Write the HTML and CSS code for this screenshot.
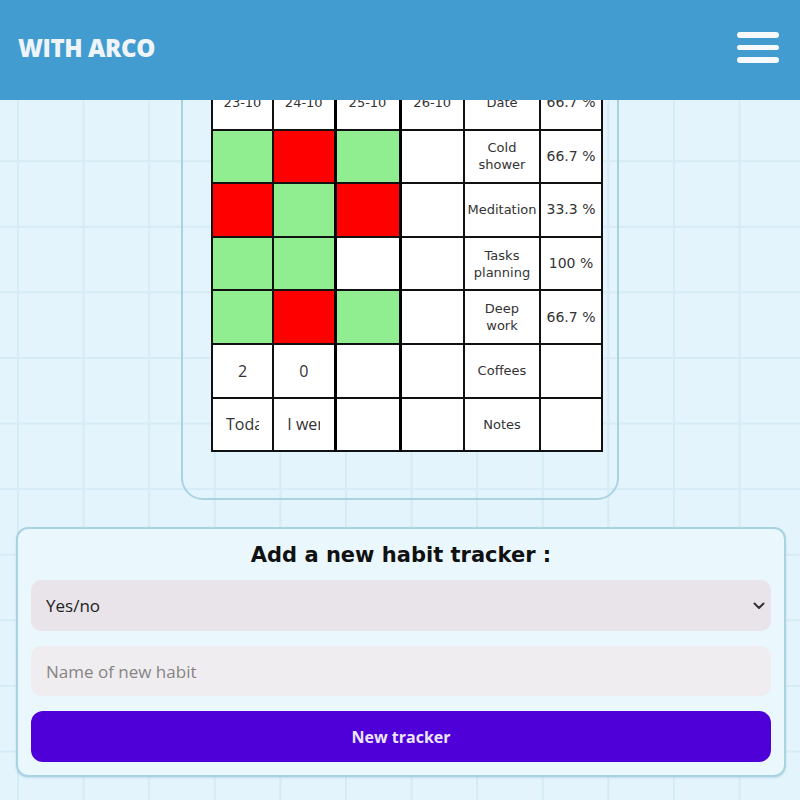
FILE: index.html
```html
<!DOCTYPE html>
<html lang="en">
<head>
<meta charset="utf-8">
<title>With Arco</title>
<link rel="stylesheet" href="styles.css">
</head>
<body>
<header class="topbar">
  <div class="brand">WITH ARCO</div>
  <div class="burger"><span></span><span></span><span></span></div>
</header>
<main class="page">
  <section class="tracker-card">
    <table class="tracker">
      <colgroup>
        <col class="c1"><col class="c2"><col class="c3"><col class="c4"><col class="c5"><col class="c6">
      </colgroup>
      <tr>
        <td>23-10</td><td>24-10</td><td class="today">25-10</td><td>26-10</td><td class="label">Date</td><td class="pct">66.7 %</td>
      </tr>
      <tr>
        <td class="yes"></td><td class="no"></td><td class="yes today"></td><td></td><td class="label">Cold<br>shower</td><td class="pct">66.7 %</td>
      </tr>
      <tr>
        <td class="no"></td><td class="yes"></td><td class="no today"></td><td></td><td class="label">Meditation</td><td class="pct">33.3 %</td>
      </tr>
      <tr>
        <td class="yes"></td><td class="yes"></td><td class="today"></td><td></td><td class="label">Tasks<br>planning</td><td class="pct">100 %</td>
      </tr>
      <tr>
        <td class="yes"></td><td class="no"></td><td class="yes today"></td><td></td><td class="label">Deep<br>work</td><td class="pct">66.7 %</td>
      </tr>
      <tr>
        <td><input class="cell-input" value="2"></td><td><input class="cell-input" value="0"></td><td class="today"></td><td></td><td class="label">Coffees</td><td class="pct"></td>
      </tr>
      <tr>
        <td><input class="cell-input" value="Today"></td><td><input class="cell-input" value="I went"></td><td class="today"></td><td></td><td class="label">Notes</td><td class="pct"></td>
      </tr>
    </table>
  </section>

  <section class="new-card">
    <h2 class="new-title">Add a new habit tracker :</h2>
    <div class="select-wrap">
      <select class="field select">
        <option>Yes/no</option>
      </select>
      <svg class="chevron" width="12" height="8" viewBox="0 0 12 8"><path d="M1.5 1.5 L6 6 L10.5 1.5" fill="none" stroke="#333" stroke-width="2" stroke-linecap="round" stroke-linejoin="round"/></svg>
    </div>
    <input class="field text" placeholder="Name of new habit">
    <button class="btn">New tracker</button>
  </section>
</main>
</body>
</html>
```
FILE: styles.css
```css
* { box-sizing: border-box; }
html, body { margin: 0; padding: 0; }
body {
  background-color: #e3f4fc;
  background-image:
    linear-gradient(to right, #d5ebf5 2px, transparent 2px),
    linear-gradient(to bottom, #d5ebf5 2px, transparent 2px);
  background-size: 65.6px 65.6px;
  background-position: 17px 29px;
  font-family: "DejaVu Sans", sans-serif;
  color: #222;
  min-height: 800px;
}
.topbar {
  position: fixed;
  top: 0; left: 0; right: 0;
  height: 100px;
  background: #429cd0;
  display: flex;
  align-items: center;
  justify-content: space-between;
  padding: 0 21px 5px 18px;
  z-index: 10;
}
.brand {
  font-family: "Open Sans", sans-serif;
  font-weight: 800;
  font-size: 24px;
  color: #eef4f8;
  letter-spacing: -0.4px;
}
.burger {
  display: flex;
  flex-direction: column;
  gap: 7px;
  width: 42px;
}
.burger span {
  display: block;
  height: 5.5px;
  border-radius: 3px;
  background: #f7fafc;
}
.page {
  padding-top: 40px;
  padding-bottom: 22px;
}
.tracker-card {
  width: 438px;
  margin: 0 auto;
  border: 2px solid #a9d3e1;
  border-radius: 22px;
  padding: 33px 14px 46px 28px;
}
.tracker {
  border-collapse: collapse;
  table-layout: fixed;
  width: 390px;
  background: #fff;
}
.c1 { width: 61px; } .c2 { width: 62px; } .c3 { width: 65px; }
.c4 { width: 64px; } .c5 { width: 76px; } .c6 { width: 62px; }
.tracker td {
  border: 2px solid #111;
  height: 53.6px;
  padding: 0;
  text-align: center;
  vertical-align: middle;
  font-size: 13px;
  color: #333;
  line-height: 17px;
  overflow: hidden;
  white-space: nowrap;
}
.tracker td.pct { font-size: 14px; }
.tracker td.today { border-left: 3px solid #000; border-right: 3px solid #000; }
.tracker td.yes { background: #90ee90; }
.tracker td.no { background: #ff0000; }
.cell-input {
  width: 33px;
  border: none;
  background: transparent;
  font-family: "Open Sans", sans-serif;
  font-size: 16px;
  color: #333;
  text-align: center;
  padding: 0;
  outline: none;
}
.new-card {
  margin: 27px 14px 0 16px;
  border: 2px solid #a9d3e1;
  border-radius: 12px;
  background: #eaf8fd;
  padding: 12px 13px 13px;
  display: flex;
  flex-direction: column;
  gap: 15px;
  box-shadow: 0 1px 2px rgba(120, 170, 190, 0.3);
}
.new-title {
  margin: 0 0 -4px;
  text-align: center;
  font-family: "DejaVu Sans", sans-serif;
  font-weight: bold;
  font-size: 21px;
  line-height: 28px;
  color: #111;
}
.select-wrap { position: relative; }
.field {
  display: block;
  width: 100%;
  height: 51px;
  border: none;
  border-radius: 10px;
  font-family: "Open Sans", sans-serif;
  font-size: 17px;
  padding: 0 15px;
  color: #222;
  outline: none;
}
.select {
  appearance: none;
  -webkit-appearance: none;
  background: #e8e4e9;
}
.chevron {
  position: absolute;
  right: 6px;
  top: 22px;
}
.text {
  height: 50px;
  background: #efedf0;
}
.text::placeholder { color: #858585; }
.btn {
  height: 51px;
  border: none;
  border-radius: 12px;
  background: #4f00d9;
  color: #ece6fb;
  font-family: "Open Sans", sans-serif;
  font-weight: 700;
  font-size: 16px;
}
```
